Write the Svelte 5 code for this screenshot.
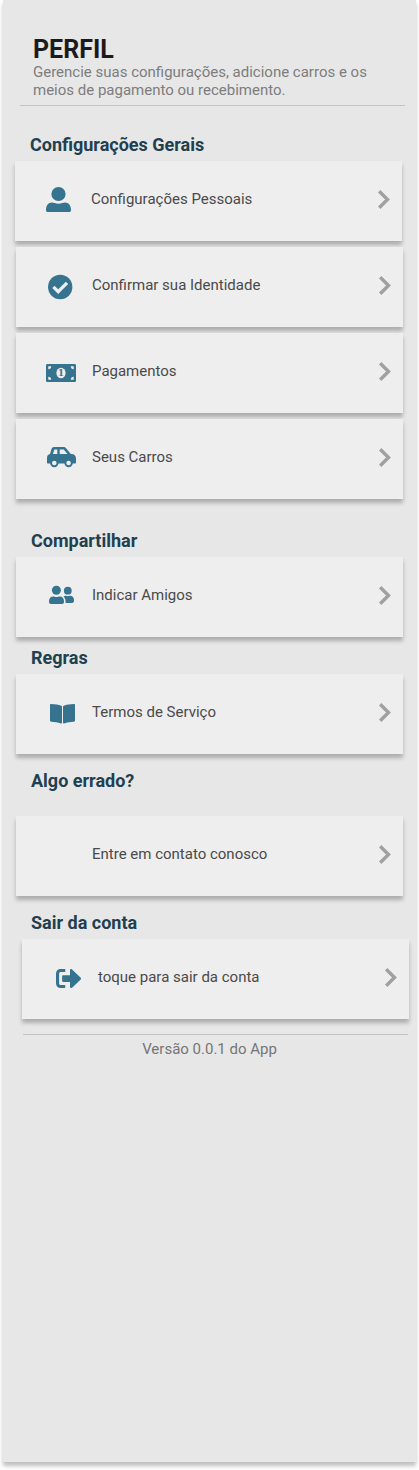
<script>
  const sections = [
    {
      title: 'Configurações Gerais',
      kind: 'general',
      items: [
        { icon: 'person', label: 'Configurações Pessoais' },
        { icon: 'check', label: 'Confirmar sua Identidade' },
        { icon: 'money', label: 'Pagamentos' },
        { icon: 'car', label: 'Seus Carros' }
      ]
    },
    { title: 'Compartilhar', kind: 'share', items: [{ icon: 'friends', label: 'Indicar Amigos' }] },
    { title: 'Regras', kind: 'rules', items: [{ icon: 'book', label: 'Termos de Serviço' }] },
    { title: 'Algo errado?', kind: 'help', items: [{ icon: '', label: 'Entre em contato conosco' }] },
    { title: 'Sair da conta', kind: 'logout', items: [{ icon: 'exit', label: 'toque para sair da conta' }] }
  ];
</script>

<main class="screen">
  <header>
    <h1>PERFIL</h1>
    <p>Gerencie suas configurações, adicione carros e os meios de pagamento ou recebimento.</p>
  </header>

  {#each sections as section}
    <section class={section.kind}>
      <h2>{section.title}</h2>
      <div class="list">
        {#each section.items as item}
          <button class="card {item.icon}">
            <svg class="icon" viewBox="26 20 40 40" aria-hidden="true">
              {#if item.icon === 'person'}
                <circle cx="43.5" cy="33" r="7.1" />
                <path d="M31 49.200c0-4.600 2.200-7.700 6-7.700 1.700 0 3.200 1.200 6.500 1.200s4.800-1.200 6.500-1.200c3.800 0 6 3.100 6 7.700 0 1-.8 1.800-1.800 1.800H32.800c-1 0-1.800-.8-1.800-1.800z" />
              {:else if item.icon === 'check'}
                <circle cx="44.200" cy="40" r="12.200" />
                <path class="mark" d="M37.400 39.900l4.800 4.800 8.800-8.800" />
              {:else if item.icon === 'money'}
                <rect x="30" y="31" width="30" height="18" rx="1.300" />
                <path class="cut" d="M32.300 33.300h2.900a2.900 2.900 0 0 1-2.900 2.900zM57.700 33.300v2.900a2.900 2.900 0 0 1-2.900-2.900zM32.300 46.700v-2.900a2.900 2.900 0 0 1 2.900 2.900zM57.700 46.700h-2.900a2.900 2.900 0 0 1 2.900-2.900z" />
                <ellipse class="cut" cx="45" cy="40" rx="4.600" ry="5.200" />
                <text x="45" y="43" text-anchor="middle">1</text>
              {:else if item.icon === 'car'}
                <path fill-rule="evenodd" d="M38 28h9.500c1 0 1.900.4 2.600 1.300l4.700 5.700h.7c2.800 0 4.500 1.900 4.500 4.500v4c0 .6-.4 1-1 1H32c-.6 0-1-.4-1-1v-4.700c0-2 1-3.600 3-3.900l1.500-4.800c.4-1.300 1.300-2.100 2.500-2.100zM38.400 30.500l-1.500 4.500h4.400v-4.500zM43.700 30.500v4.500h7.800l-3.600-4.200c-.2-.2-.4-.3-.7-.3z" />
                <circle cx="38.300" cy="44" r="4.200" />
                <circle cx="52.600" cy="44" r="4.200" />
                <circle class="cut" cx="38.300" cy="44" r="2.300" />
                <circle class="cut" cx="52.600" cy="44" r="2.300" />
              {:else if item.icon === 'friends'}
                <circle cx="40.400" cy="33.300" r="4.500" />
                <circle cx="51.800" cy="33.700" r="3.900" />
                <path d="M33 45v-.8c0-2.800 1.700-4.800 4.300-4.800 1.200 0 1.700.5 3.200.5s2-.5 3.200-.5c2.600 0 4.300 2 4.300 4.800v.8c0 1.200-.8 2-2 2H35c-1.200 0-2-.8-2-2z" />
                <path d="M47.500 39.600c.6-.5 1.300-.8 2.100-.8 1 0 1.200.4 2.300.4s1.300-.4 2.300-.4c2.200 0 3.800 1.800 3.800 4v1.300c0 1.100-.8 1.900-1.900 1.900h-6.500c.2-2.800-.5-4.900-2.100-6.400z" />
              {:else if item.icon === 'book'}
                <path d="M35 30c4.200.2 7.700.7 10.300 1.800.5.200.7.500.7 1v15.800c0 .7-.5 1-1.200.8-2.900-1-5.900-1.500-9.700-1.700-.7 0-1.100-.5-1.100-1.100V31c0-.6.400-1 1-1zM58 30c-4.200.2-7.700.7-10.300 1.800-.5.200-.7.500-.7 1v15.800c0 .7.500 1 1.200.8 2.900-1 5.900-1.500 9.700-1.700.7 0 1.100-.5 1.100-1.100V31c0-.6-.4-1-1-1z" />
              {:else if item.icon === 'exit'}
                <path d="M42.600 30h-4c-2.600 0-4.600 2-4.600 4.600v9.800c0 2.600 2 4.600 4.600 4.600h4c.4 0 .7-.3.700-.7v-1.700c0-.4-.3-.7-.7-.7h-4c-.8 0-1.500-.7-1.500-1.500v-9.800c0-.8.7-1.500 1.500-1.500h4c.4 0 .7-.3.700-.7v-1.700c0-.4-.3-.7-.7-.7z" />
                <path d="M58.700 38.700l-8.600-8.300c-.8-.8-2.100-.2-2.100.9v4.900h-6.700c-.7 0-1.200.5-1.200 1.200v4.300c0 .7.500 1.200 1.200 1.200H48v4.900c0 1.100 1.300 1.600 2.100.9l8.600-8.300c.5-.5.5-1.200 0-1.700z" />
              {/if}
            </svg>
            <span class="label">{item.label}</span>
            <svg class="chevron" viewBox="0 0 14 20" aria-hidden="true">
              <path d="M2.200 2.200l8.300 8.300-8.300 8.300" />
            </svg>
          </button>
        {/each}
      </div>
    </section>
  {/each}

  <footer>Versão 0.0.1 do App</footer>
</main>

<style>
  :global(body) {
    background: #fff;
  }

  .screen {
    box-sizing: border-box;
    width: 413px;
    height: 1462px;
    margin: 0 0 8px 3px;
    padding: 34px 0 0;
    background: #e7e7e7;
    box-shadow: 0 4px 4px rgba(0, 0, 0, 0.25);
    font-family: Roboto, sans-serif;
  }

  header {
    box-sizing: border-box;
    width: 385px;
    height: 72px;
    margin-left: 17px;
    padding-left: 13px;
    border-bottom: 1px solid #c4c4c4;
  }

  h1 {
    height: 29px;
    margin: 0;
    font-size: 25px;
    line-height: 31px;
    font-weight: 700;
    color: #1b1b1b;
  }

  p {
    width: 350px;
    margin: 0;
    font-size: 15px;
    line-height: 18px;
    color: #7d7d7d;
  }

  section {
    box-sizing: border-box;
    width: 387px;
    margin-left: 13px;
  }

  h2 {
    margin: 0;
    padding-left: 15px;
    font-size: 18px;
    line-height: 22px;
    font-weight: 700;
    color: #1e404f;
  }

  .list {
    display: flex;
    flex-direction: column;
    gap: 6px;
  }

  .general {
    padding-top: 28px;
  }

  .general h2 {
    padding-left: 14px;
    padding-bottom: 5px;
  }

  .share {
    padding-top: 31px;
  }

  .share h2,
  .rules h2,
  .logout h2 {
    padding-bottom: 5px;
  }

  .rules {
    padding-top: 10px;
  }

  .help {
    padding-top: 16px;
  }

  .help h2 {
    padding-bottom: 24px;
  }

  .logout {
    padding-top: 16px;
  }

  .logout .list {
    margin: 0 -6px 0 6px;
  }

  .card {
    display: flex;
    align-items: center;
    box-sizing: border-box;
    width: 387px;
    height: 80px;
    padding: 0 11px 0 26px;
    border: 0;
    background: #eee;
    box-shadow: 0 4px 4px rgba(0, 0, 0, 0.25);
    font: 15px/18px Roboto, sans-serif;
    color: #4a4a4a;
    text-align: left;
  }

  .person {
    margin-left: -1px;
  }

  .icon {
    flex: none;
    width: 40px;
    height: 40px;
    margin-right: 10px;
    fill: #36738f;
  }

  .mark {
    fill: none;
    stroke: #eee;
    stroke-width: 3.3;
  }

  .cut {
    fill: #eee;
  }

  .icon text {
    font: 700 8.5px "DejaVu Serif", serif;
  }

  .label {
    flex: 1;
    padding-bottom: 4px;
  }

  .chevron {
    flex: none;
    width: 14px;
    height: 20px;
    margin-top: -4px;
    fill: none;
    stroke: #a0a0a0;
    stroke-width: 3.4;
  }

  footer {
    box-sizing: border-box;
    width: 385px;
    margin: 15px 0 0 20px;
    padding: 5px 12px 0 0;
    border-top: 1px solid #c4c4c4;
    font-size: 15px;
    line-height: 18px;
    text-align: center;
    color: #757575;
  }
</style>
